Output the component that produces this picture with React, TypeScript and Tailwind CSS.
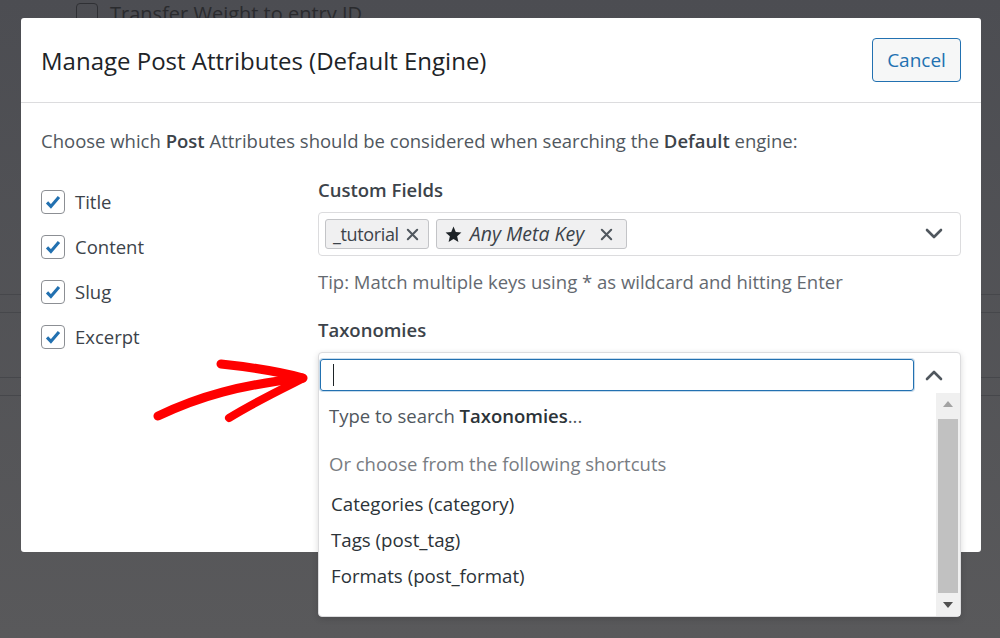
import React from 'react';

const font = { fontFamily: '"Open Sans", "Noto Sans", "Liberation Sans", sans-serif' };

const CheckBox: React.FC = () => (
  <span className="flex h-6 w-6 shrink-0 items-center justify-center rounded-[4px] border border-[#8c8f94] bg-white">
    <svg viewBox="0 0 24 24" className="h-[22px] w-[22px]">
      <path d="M5.5 12.5l4.2 4.3L18.5 6.5" stroke="#2271b1" strokeWidth="3.4" fill="none" strokeLinejoin="miter" />
    </svg>
  </span>
);

const XIcon: React.FC = () => (
  <svg viewBox="0 0 16 16" className="h-[15px] w-[15px]">
    <path d="M3 3l10 10M13 3L3 13" stroke="#50575e" strokeWidth="2.2" strokeLinecap="round" />
  </svg>
);

const Chevron: React.FC<{ up?: boolean }> = ({ up }) => (
  <svg viewBox="0 0 20 20" className="h-5 w-5">
    <path d={up ? 'M3 14l7-7 7 7' : 'M3 6l7 7 7-7'} stroke="#50575e" strokeWidth="2.6" fill="none" strokeLinecap="round" strokeLinejoin="round" />
  </svg>
);

const attributes = ['Title', 'Content', 'Slug', 'Excerpt'];
const shortcuts = ['Categories (category)', 'Tags (post_tag)', 'Formats (post_format)'];

export default function App() {
  return (
    <div className="relative h-[638px] w-[1000px] overflow-hidden bg-gradient-to-b from-[#4c4d52] to-[#59595b]" style={font}>
      {/* page behind the overlay */}
      <div className="flex items-center gap-3 pl-[76px] pt-[3px]">
        <span className="h-[22px] w-[22px] rounded-[4px] border border-[#2f3034]" />
        <span className="text-[20px] leading-[22px] text-[#2a2b2e]">Transfer Weight to entry ID</span>
      </div>
      <div className="absolute left-0 top-[294px] h-px w-full bg-[#46474b]" />
      <div className="absolute left-0 top-[312px] h-px w-full bg-[#46474b]" />
      <div className="absolute left-0 top-[377px] h-px w-full bg-[#46474b]" />
      <div className="absolute left-0 top-[395px] h-px w-full bg-[#46474b]" />

      {/* modal */}
      <div className="absolute left-[21px] top-[18px] flex h-[534px] w-[960px] flex-col rounded-[3px] bg-white">
        <div className="flex h-[85px] shrink-0 items-center justify-between border-b border-[#dcdcde] px-5">
          <h1 className="pt-[2px] text-[24px] text-[#1d2327]">Manage Post Attributes (Default Engine)</h1>
          <button className="h-[44px] w-[89px] rounded-[4px] border border-[#2271b1] bg-[#f6f7f7] text-[19px] text-[#2271b1]">
            Cancel
          </button>
        </div>

        <div className="px-5 pt-[25px]">
          <p className="text-[18.5px] leading-[26px] text-[#50575e]">
            Choose which <b className="font-semibold text-[#3c434a]">Post</b> Attributes should be considered when searching the{' '}
            <b className="font-semibold text-[#3c434a]">Default</b> engine:
          </p>

          <div className="mt-[24px] flex">
            <div className="flex w-[277px] shrink-0 flex-col gap-[21px] pt-[12px]">
              {attributes.map((a) => (
                <label key={a} className="flex h-6 items-center gap-[10px] text-[18.5px] text-[#3c434a]">
                  <CheckBox />
                  {a}
                </label>
              ))}
            </div>

            <div className="flex-1">
              <div className="text-[18.5px] font-semibold leading-[24px] text-[#3c434a]">Custom Fields</div>
              <div className="mt-[10px] flex h-[44px] items-center rounded-[4px] border border-[#dcdcde] pl-[6px] pr-4">
                <div className="flex flex-1 gap-[7px]">
                  <span className="flex h-[30px] items-center gap-[6px] rounded-[3px] border border-[#c3c4c7] bg-[#f0f0f1] pl-[7px] pr-[8px] text-[18px] tracking-[-0.02em] text-[#3c434a]">
                    _tutorial <XIcon />
                  </span>
                  <span className="flex h-[30px] items-center gap-[7px] rounded-[3px] border border-[#c3c4c7] bg-[#f0f0f1] pl-[7px] pr-[12px] text-[19.5px] text-[#3c434a]">
                    <svg viewBox="0 0 24 24" className="h-[19px] w-[19px]">
                      <path d="M12 2l2.9 6.9 7.1.6-5.4 4.7 1.6 7.3L12 17.7 5.8 21.5l1.6-7.3L2 9.5l7.1-.6z" fill="#1d2327" />
                    </svg>
                    <i>Any Meta Key</i>
                    <span className="ml-[8px]"><XIcon /></span>
                  </span>
                </div>
                <Chevron />
              </div>
              <p className="mt-[13px] text-[18.5px] leading-[26px] text-[#646970]">
                Tip: Match multiple keys using * as wildcard and hitting Enter
              </p>

              <div className="mt-[23px] text-[18.5px] font-semibold leading-[24px] text-[#3c434a]">Taxonomies</div>
              <div className="mt-[10px] flex h-[265px] flex-col rounded-[4px] border border-[#dcdcde] bg-white shadow-[0_2px_6px_rgba(0,0,0,0.15)]">
                <div className="flex items-center pl-px pr-4 pt-[6px]">
                  <div className="flex h-[32px] flex-1 items-center rounded-[3px] border border-[#2271b1] pl-3 shadow-[0_0_0_1px_rgba(34,113,177,0.25)]">
                    <span className="h-[22px] w-px bg-[#1d2327]" />
                  </div>
                  <span className="ml-[10px]"><Chevron up /></span>
                </div>
                <div className="mt-[2px] flex flex-1 overflow-hidden">
                  <div className="flex-1 pl-[10px]">
                    <p className="mt-[10px] text-[18.5px] leading-[26px] text-[#50575e]">
                      Type to search <b className="font-semibold text-[#2c3338]">Taxonomies</b>...
                    </p>
                    <p className="mt-[22px] text-[18.5px] leading-[26px] text-[#787c82]">Or choose from the following shortcuts</p>
                    <ul className="mt-[14px] flex flex-col gap-[10px] pl-[2px]">
                      {shortcuts.map((s) => (
                        <li key={s} className="text-[18.7px] leading-[26px] text-[#2c3338]">{s}</li>
                      ))}
                    </ul>
                  </div>
                  <div className="flex w-[24px] flex-col items-center bg-[#f0f0f0]">
                    <span className="mt-[8px] h-0 w-0 border-x-[5px] border-b-[6px] border-x-transparent border-b-[#a3a3a3]" />
                    <span className="mt-[12px] w-[20px] flex-1 bg-[#c1c1c1]" />
                    <span className="mb-[8px] mt-[9px] h-0 w-0 border-x-[5px] border-t-[6px] border-x-transparent border-t-[#505050]" />
                  </div>
                </div>
              </div>
            </div>
          </div>
        </div>
      </div>

      {/* annotation arrow */}
      <svg className="pointer-events-none absolute left-0 top-0" width="1000" height="638">
        <path d="M158 416 C 200 396, 240 385, 302 378" stroke="#ff0000" strokeWidth="9" fill="none" strokeLinecap="round" />
        <path d="M221 364 C 250 367, 280 372, 303 378" stroke="#ff0000" strokeWidth="9" fill="none" strokeLinecap="round" />
        <path d="M229 418 C 255 402, 280 390, 302 379" stroke="#ff0000" strokeWidth="8" fill="none" strokeLinecap="round" />
      </svg>
    </div>
  );
}
